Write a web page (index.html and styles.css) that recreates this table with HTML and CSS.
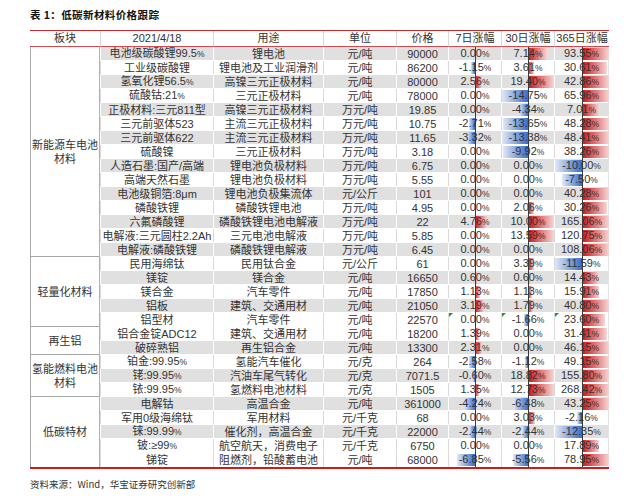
FILE: index.html
```html
<!DOCTYPE html>
<html lang="zh">
<head>
<meta charset="utf-8">
<title>低碳新材料价格跟踪</title>
<link rel="stylesheet" href="styles.css">
</head>
<body>
<div class="title">表 1：低碳新材料价格跟踪</div>
<table class="tbl">
<colgroup>
<col class="c1"><col class="c2"><col class="c3"><col class="c4"><col class="c5"><col class="c6"><col class="c7"><col class="c8">
</colgroup>
<thead>
<tr><th>板块</th><th>2021/4/18</th><th>用途</th><th>单位</th><th>价格</th><th>7日涨幅</th><th>30日涨幅</th><th>365日涨幅</th></tr>
</thead>
<tbody>
<tr class="g"><td class="grp" rowspan="15">新能源车电池<br>材料</td><td>电池级碳酸锂99.5<small>%</small></td><td>锂电池</td><td>元/吨</td><td>90000</td>
<td class="pc"><span>0.00<small>%</small></span></td>
<td class="pc"><i class="bar up" style="width:19px"></i><span>7.14<small>%</small></span></td>
<td class="pc"><i class="bar up" style="width:27px"></i><span>93.55<small>%</small></span></td></tr>
<tr class="w"><td>工业级碳酸锂</td><td>锂电池及工业润滑剂</td><td>元/吨</td><td>86200</td>
<td class="pc"><i class="bar dn" style="width:4px"></i><span>-1.15<small>%</small></span></td>
<td class="pc"><i class="bar up" style="width:6px"></i><span>3.61<small>%</small></span></td>
<td class="pc"><i class="bar up" style="width:25px"></i><span>30.61<small>%</small></span></td></tr>
<tr class="g"><td>氢氧化锂56.5<small>%</small></td><td>高镍三元正极材料</td><td>元/吨</td><td>80000</td>
<td class="pc"><i class="bar up" style="width:7px"></i><span>2.56<small>%</small></span></td>
<td class="pc"><i class="bar up" style="width:26px"></i><span>19.40<small>%</small></span></td>
<td class="pc"><i class="bar up" style="width:27px"></i><span>42.86<small>%</small></span></td></tr>
<tr class="w"><td>硫酸钴:21<small>%</small></td><td>三元正极材料</td><td>元/吨</td><td>78000</td>
<td class="pc"><span>0.00<small>%</small></span></td>
<td class="pc"><i class="bar dn" style="width:26px"></i><span>-14.75<small>%</small></span></td>
<td class="pc"><i class="bar up" style="width:27px"></i><span>65.96<small>%</small></span></td></tr>
<tr class="g"><td>正极材料:三元811型</td><td>高镍三元正极材料</td><td>万元/吨</td><td>19.85</td>
<td class="pc"><span>0.00<small>%</small></span></td>
<td class="pc"><i class="bar dn" style="width:9px"></i><span>-4.34<small>%</small></span></td>
<td class="pc"><i class="bar up" style="width:17px"></i><span>7.01<small>%</small></span></td></tr>
<tr class="w"><td>三元前驱体523</td><td>主流三元正极材料</td><td>万元/吨</td><td>10.75</td>
<td class="pc"><i class="bar dn" style="width:6px"></i><span>-2.71<small>%</small></span></td>
<td class="pc"><i class="bar dn" style="width:25px"></i><span>-13.65<small>%</small></span></td>
<td class="pc"><i class="bar up" style="width:27px"></i><span>48.28<small>%</small></span></td></tr>
<tr class="g"><td>三元前驱体622</td><td>主流三元正极材料</td><td>万元/吨</td><td>11.65</td>
<td class="pc"><i class="bar dn" style="width:8px"></i><span>-3.32<small>%</small></span></td>
<td class="pc"><i class="bar dn" style="width:26px"></i><span>-13.38<small>%</small></span></td>
<td class="pc"><i class="bar up" style="width:27px"></i><span>48.41<small>%</small></span></td></tr>
<tr class="w"><td>硫酸镍</td><td>三元正极材料</td><td>万元/吨</td><td>3.18</td>
<td class="pc"><span>0.00<small>%</small></span></td>
<td class="pc"><i class="bar dn" style="width:25px"></i><span>-9.92<small>%</small></span></td>
<td class="pc"><i class="bar up" style="width:27px"></i><span>38.26<small>%</small></span></td></tr>
<tr class="g"><td>人造石墨:国产/高端</td><td>锂电池负极材料</td><td>万元/吨</td><td>6.75</td>
<td class="pc"><span>0.00<small>%</small></span></td>
<td class="pc"><span>0.00<small>%</small></span></td>
<td class="pc"><i class="bar dn" style="width:27px"></i><span>-10.00<small>%</small></span></td></tr>
<tr class="w"><td>高端天然石墨</td><td>锂电池负极材料</td><td>万元/吨</td><td>5.55</td>
<td class="pc"><span>0.00<small>%</small></span></td>
<td class="pc"><span>0.00<small>%</small></span></td>
<td class="pc"><i class="bar dn" style="width:20px"></i><span>-7.50<small>%</small></span></td></tr>
<tr class="g"><td>电池级铜箔:8μm</td><td>锂电池负极集流体</td><td>元/公斤</td><td>101</td>
<td class="pc"><span>0.00<small>%</small></span></td>
<td class="pc"><span>0.00<small>%</small></span></td>
<td class="pc"><i class="bar up" style="width:27px"></i><span>40.28<small>%</small></span></td></tr>
<tr class="w"><td>磷酸铁锂</td><td>磷酸铁锂电池</td><td>万元/吨</td><td>4.95</td>
<td class="pc"><span>0.00<small>%</small></span></td>
<td class="pc"><i class="bar up" style="width:6px"></i><span>2.06<small>%</small></span></td>
<td class="pc"><i class="bar up" style="width:25px"></i><span>30.26<small>%</small></span></td></tr>
<tr class="g"><td>六氟磷酸锂</td><td>磷酸铁锂电池电解液</td><td>万元/吨</td><td>22</td>
<td class="pc"><i class="bar up" style="width:12px"></i><span>4.76<small>%</small></span></td>
<td class="pc"><i class="bar up" style="width:26px"></i><span>10.00<small>%</small></span></td>
<td class="pc"><i class="bar up" style="width:27px"></i><span>165.06<small>%</small></span></td></tr>
<tr class="w"><td>电解液:三元圆柱2.2Ah</td><td>三元电池电解液</td><td>万元/吨</td><td>5.85</td>
<td class="pc"><span>0.00<small>%</small></span></td>
<td class="pc"><i class="bar up" style="width:26px"></i><span>13.59<small>%</small></span></td>
<td class="pc"><i class="bar up" style="width:27px"></i><span>120.75<small>%</small></span></td></tr>
<tr class="g"><td>电解液:磷酸铁锂</td><td>磷酸铁锂电解液</td><td>万元/吨</td><td>6.45</td>
<td class="pc"><span>0.00<small>%</small></span></td>
<td class="pc"><span>0.00<small>%</small></span></td>
<td class="pc"><i class="bar up" style="width:27px"></i><span>108.06<small>%</small></span></td></tr>

<tr class="w"><td class="grp" rowspan="5">轻量化材料</td><td>民用海绵钛</td><td>民用钛合金</td><td>元/公斤</td><td>61</td>
<td class="pc"><span>0.00<small>%</small></span></td>
<td class="pc"><i class="bar up" style="width:6px"></i><span>3.39<small>%</small></span></td>
<td class="pc"><i class="bar dn" style="width:27px"></i><span>-11.59<small>%</small></span></td></tr>
<tr class="g"><td>镁锭</td><td>镁合金</td><td>元/吨</td><td>16650</td>
<td class="pc"><i class="bar up" style="width:2px"></i><span>0.60<small>%</small></span></td>
<td class="pc"><i class="bar up" style="width:2px"></i><span>0.60<small>%</small></span></td>
<td class="pc"><i class="bar up" style="width:17px"></i><span>14.43<small>%</small></span></td></tr>
<tr class="w"><td>镁合金</td><td>汽车零件</td><td>元/吨</td><td>17850</td>
<td class="pc"><i class="bar up" style="width:5px"></i><span>1.13<small>%</small></span></td>
<td class="pc"><i class="bar up" style="width:4px"></i><span>1.13<small>%</small></span></td>
<td class="pc"><i class="bar up" style="width:17px"></i><span>15.91<small>%</small></span></td></tr>
<tr class="g"><td>铝板</td><td>建筑、交通用材</td><td>元/吨</td><td>21050</td>
<td class="pc"><i class="bar up" style="width:9px"></i><span>3.19<small>%</small></span></td>
<td class="pc"><i class="bar up" style="width:5px"></i><span>1.79<small>%</small></span></td>
<td class="pc"><i class="bar up" style="width:27px"></i><span>40.80<small>%</small></span></td></tr>
<tr class="w"><td>铝型材</td><td>汽车零件</td><td>元/吨</td><td>22570</td>
<td class="pc"><i class="flag"></i><span>0.00<small>%</small></span></td>
<td class="pc"><i class="flag"></i><i class="bar dn" style="width:4px"></i><span>-1.66<small>%</small></span></td>
<td class="pc"><i class="flag"></i><i class="bar up" style="width:23px"></i><span>23.60<small>%</small></span></td></tr>

<tr class="w"><td class="grp" rowspan="2">再生铝</td><td>铝合金锭ADC12</td><td>建筑、交通用材</td><td>元/吨</td><td>18200</td>
<td class="pc"><i class="bar up" style="width:4px"></i><span>1.39<small>%</small></span></td>
<td class="pc"><span>0.00<small>%</small></span></td>
<td class="pc"><i class="bar up" style="width:25px"></i><span>31.41<small>%</small></span></td></tr>
<tr class="g"><td>破碎熟铝</td><td>再生铝合金</td><td>元/吨</td><td>13300</td>
<td class="pc"><i class="bar up" style="width:7px"></i><span>2.31<small>%</small></span></td>
<td class="pc"><span>0.00<small>%</small></span></td>
<td class="pc"><i class="bar up" style="width:27px"></i><span>46.15<small>%</small></span></td></tr>

<tr class="w"><td class="grp" rowspan="3">氢能燃料电池<br>材料</td><td>铂金:99.95<small>%</small></td><td>氢能汽车催化</td><td>元/克</td><td>264</td>
<td class="pc"><i class="bar dn" style="width:6px"></i><span>-2.58<small>%</small></span></td>
<td class="pc"><i class="bar dn" style="width:3px"></i><span>-1.12<small>%</small></span></td>
<td class="pc"><i class="bar up" style="width:27px"></i><span>49.15<small>%</small></span></td></tr>
<tr class="g"><td>铑:99.95<small>%</small></td><td>汽油车尾气转化</td><td>元/克</td><td>7071.5</td>
<td class="pc"><i class="bar dn" style="width:2px"></i><span>-0.60<small>%</small></span></td>
<td class="pc"><i class="bar up" style="width:26px"></i><span>18.82<small>%</small></span></td>
<td class="pc"><i class="bar up" style="width:27px"></i><span>155.80<small>%</small></span></td></tr>
<tr class="w"><td>铱:99.95<small>%</small></td><td>氢燃料电池材料</td><td>元/克</td><td>1505</td>
<td class="pc"><i class="bar up" style="width:4px"></i><span>1.35<small>%</small></span></td>
<td class="pc"><i class="bar up" style="width:26px"></i><span>12.73<small>%</small></span></td>
<td class="pc"><i class="bar up" style="width:27px"></i><span>268.42<small>%</small></span></td></tr>

<tr class="g"><td class="grp last" rowspan="5">低碳特材</td><td>电解钴</td><td>高温合金</td><td>元/吨</td><td>361000</td>
<td class="pc"><i class="bar dn" style="width:11px"></i><span>-4.24<small>%</small></span></td>
<td class="pc"><i class="bar dn" style="width:15px"></i><span>-6.48<small>%</small></span></td>
<td class="pc"><i class="bar up" style="width:27px"></i><span>43.25<small>%</small></span></td></tr>
<tr class="w"><td>军用0级海绵钛</td><td>军用材料</td><td>元/千克</td><td>68</td>
<td class="pc"><span>0.00<small>%</small></span></td>
<td class="pc"><i class="bar up" style="width:7px"></i><span>3.03<small>%</small></span></td>
<td class="pc"><i class="bar dn" style="width:5px"></i><span>-2.16<small>%</small></span></td></tr>
<tr class="g"><td>铼:99.99<small>%</small></td><td>催化剂，高温合金</td><td>元/千克</td><td>22000</td>
<td class="pc"><i class="bar dn" style="width:6px"></i><span>-2.44<small>%</small></span></td>
<td class="pc"><i class="bar dn" style="width:6px"></i><span>-2.44<small>%</small></span></td>
<td class="pc"><i class="bar dn" style="width:27px"></i><span>-12.35<small>%</small></span></td></tr>
<tr class="w"><td>铍:≥99<small>%</small></td><td>航空航天，消费电子</td><td>元/千克</td><td>6750</td>
<td class="pc"><span>0.00<small>%</small></span></td>
<td class="pc"><span>0.00<small>%</small></span></td>
<td class="pc"><i class="bar up" style="width:17px"></i><span>17.89<small>%</small></span></td></tr>
<tr class="w"><td>锑锭</td><td>阻燃剂，铅酸蓄电池</td><td>元/吨</td><td>68000</td>
<td class="pc"><i class="bar dn" style="width:18px"></i><span>-6.85<small>%</small></span></td>
<td class="pc"><i class="bar dn" style="width:15px"></i><span>-5.56<small>%</small></span></td>
<td class="pc"><i class="bar up" style="width:27px"></i><span>78.95<small>%</small></span></td></tr>
</tbody>
</table>
<div class="source">资料来源：Wind，华宝证券研究创新部</div>
</body>
</html>
```
FILE: styles.css
```css
html, body {
  margin: 0;
  padding: 0;
  background: #ffffff;
}
body {
  width: 640px;
  font-family: "Liberation Sans", "Noto Sans CJK SC", sans-serif;
  color: #333333;
}
.title {
  height: 30px;
  line-height: 30px;
  padding-left: 30px;
  font-family: "Noto Sans CJK SC", sans-serif;
  font-size: 10.5px;
  font-weight: 700;
  color: #111111;
  letter-spacing: 0.4px;
}
.tbl {
  margin-left: 30px;
  width: 579px;
  table-layout: fixed;
  border-collapse: separate;
  border-spacing: 0;
  font-size: 11px;
  border-top: 1.5px solid #cc2a2e;
  border-bottom: 2px solid #d01a1e;
}
.c1 { width: 70px; }
.c2 { width: 113px; }
.c3 { width: 110px; }
.c4 { width: 73px; }
.c5 { width: 52px; }
.c6 { width: 53px; }
.c7 { width: 53px; }
.c8 { width: 55px; }
.tbl th {
  height: 15px;
  padding: 0;
  font-weight: 400;
  line-height: 13px;
  text-align: center;
  color: #333333;
  border-left: 1px solid #d8d8d8;
  border-bottom: 1px solid #d44a4e;
  white-space: nowrap;
}
.tbl th:first-child { border-left: 0; }
.tbl tbody tr { height: 14px; }
.tbl td {
  padding: 0;
  line-height: 12px;
  text-align: center;
  white-space: nowrap;
  vertical-align: middle;
  border-left: 1px solid #dadada;
  border-bottom: 1px solid #ffffff;
}
.tbl td:last-child { border-right: 1px solid #e2e2e2; }
.tbl tr.g td { background: #e0e0e0; border-left-color: #ffffff; }
.tbl tr.g td:last-child { border-right-color: #e2e2e2; }
.tbl td.grp {
  background: #ffffff;
  border-left: 1px solid #a8a8a8;
  border-right: 1px solid #b0b0b0;
  border-bottom: 1px solid #a8a8a8;
  line-height: 14px;
  white-space: normal;
  color: #333333;
}
.tbl tr.g td.grp { background: #ffffff; border-left-color: #a8a8a8; }
.tbl td.grp.last { border-bottom: 0; }
.tbl td small { font-size: 8.5px; }
.pc { position: relative; }
.pc::before {
  content: "";
  position: absolute;
  left: 50%;
  top: 0;
  bottom: -1px;
  width: 1px;
  background: #3a3a3a;
  z-index: 1;
}
.pc span { position: relative; z-index: 2; }
.bar {
  position: absolute;
  top: 1px;
  bottom: 0;
  z-index: 0;
}
.up {
  left: 50%;
  background: linear-gradient(to right, #cc1414, #f7d6d6);
}
.dn {
  right: 50%;
  background: linear-gradient(to left, #3a6cc8, #e0e8f6);
}
.flag {
  position: absolute;
  top: 0;
  left: 0;
  width: 0;
  height: 0;
  border-top: 4px solid #1d9a2a;
  border-right: 4px solid transparent;
  z-index: 3;
}
.source {
  height: 30px;
  line-height: 30px;
  padding-left: 30px;
  font-family: "Noto Sans CJK SC", sans-serif;
  font-size: 9.5px;
  color: #333333;
}
```
